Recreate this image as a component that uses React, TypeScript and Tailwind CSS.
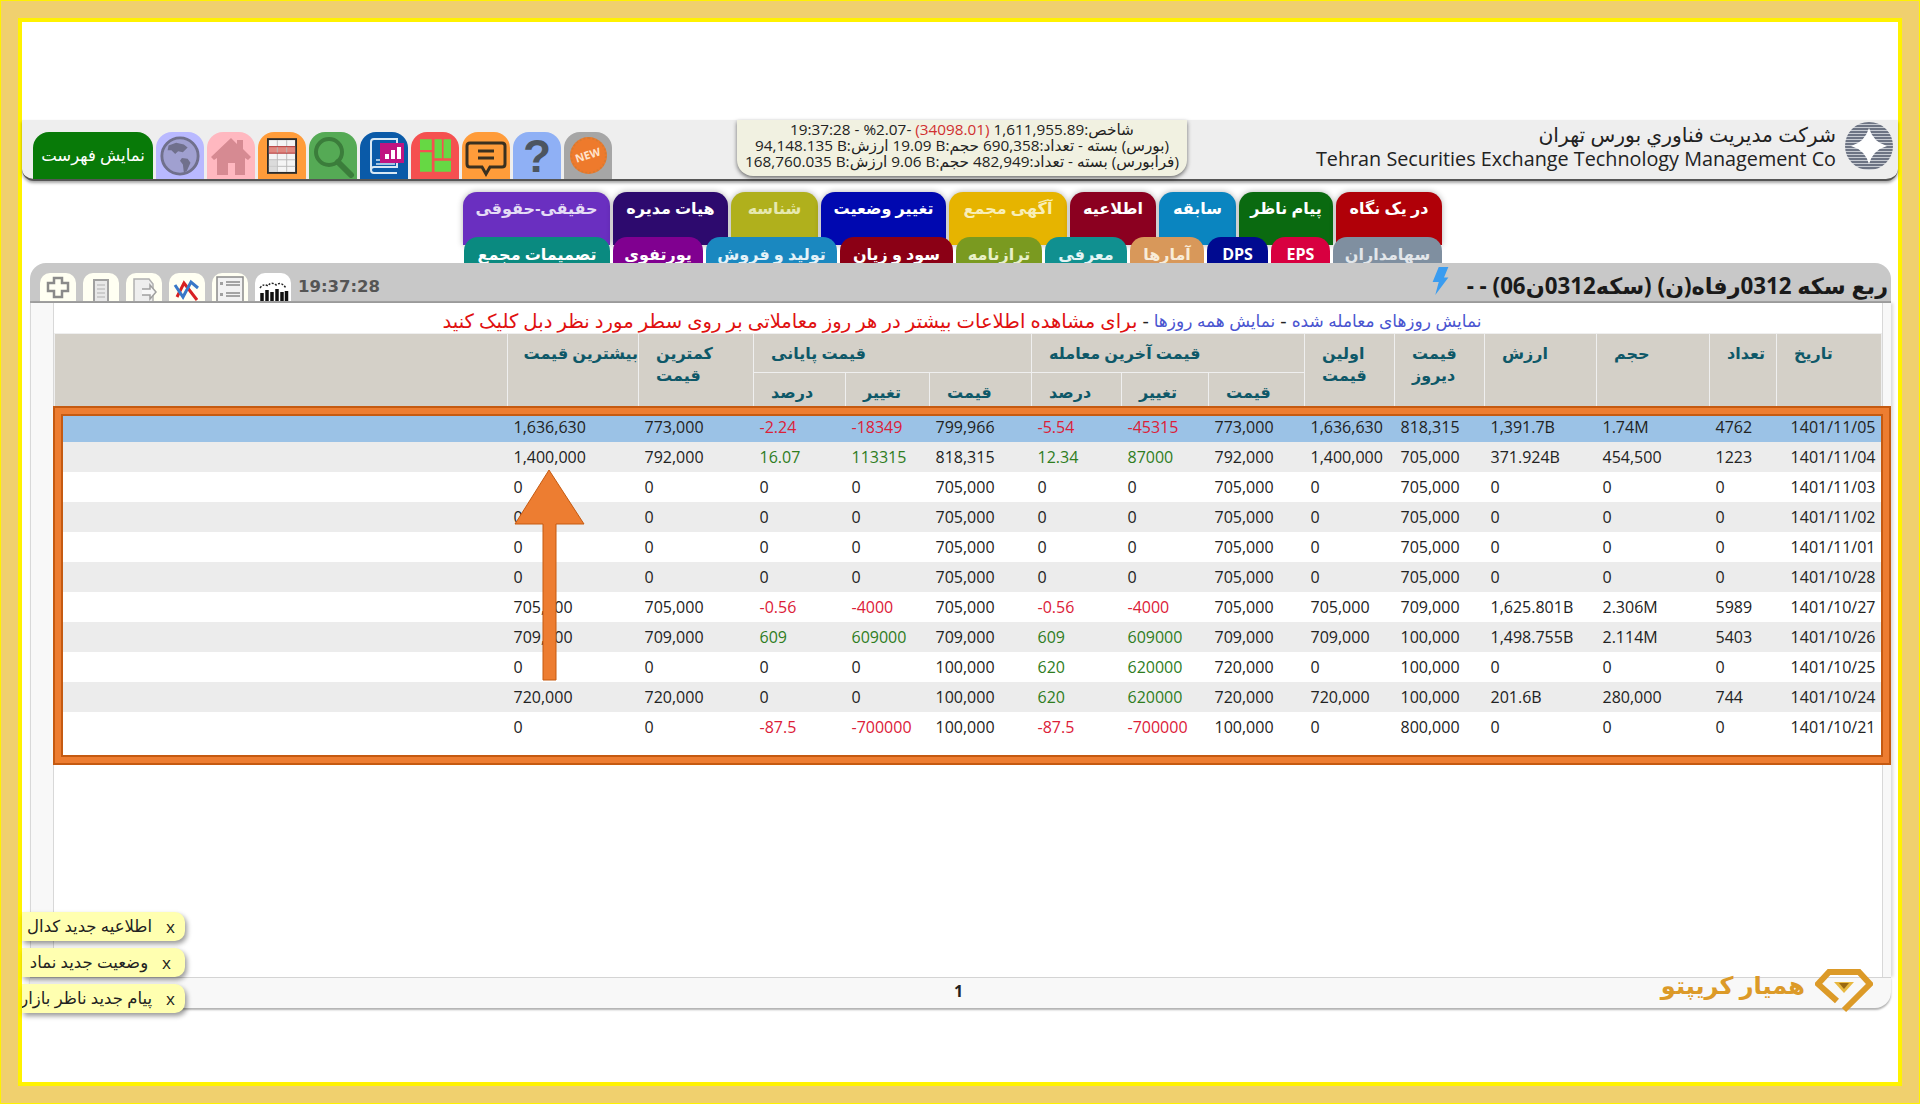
import type { ReactNode } from "react";

const tabsTop = [
  { label: "حقیقی-حقوقی", cls: "w-[147px] bg-[#6a2fc0] text-[#e4dcf5]" },
  { label: "هیات مدیره", cls: "w-[115px] bg-[#2d0a6e] text-white" },
  { label: "شناسه", cls: "w-[87px] bg-[#b0b01c] text-[#e6e8b0]" },
  { label: "تغییر وضعیت", cls: "w-[125px] bg-[#0008b0] text-white" },
  { label: "آگهی مجمع", cls: "w-[118px] bg-[#e6b400] text-[#f8eeb8]" },
  { label: "اطلاعیه", cls: "w-[86px] bg-[#8b0020] text-white" },
  { label: "سابقه", cls: "w-[77px] bg-[#0a85c0] text-white" },
  { label: "پیام ناظر", cls: "w-[94px] bg-[#0a6a10] text-white" },
  { label: "در یک نگاه", cls: "w-[106px] bg-[#b00008] text-white" },
];

const tabsBottom = [
  { label: "تصمیمات مجمع", cls: "w-[146px] bg-[#0a8a80] text-white" },
  { label: "پورتفوی", cls: "w-[90px] bg-[#800090] text-white" },
  { label: "تولید و فروش", cls: "w-[131px] bg-[#1a88c0] text-[#e4f2f8]" },
  { label: "سود و زیان", cls: "w-[113px] bg-[#8b0015] text-white" },
  { label: "ترازنامه", cls: "w-[86px] bg-[#7a9a20] text-[#e8f0c8]" },
  { label: "معرفی", cls: "w-[82px] bg-[#109090] text-[#e4f4f4]" },
  { label: "آمارها", cls: "w-[74px] bg-[#d8985a] text-[#f8ecd8]" },
  { label: "DPS", cls: "w-[61px] bg-[#000a90] text-white" },
  { label: "EPS", cls: "w-[59px] bg-[#d80040] text-white" },
  { label: "سهامداران", cls: "w-[109px] bg-[#7f8fa0] text-[#e2e6ea]" },
];

// date, count, volume, value, yesterday, first, last price, last change, last %, close, close change, close %, low, high
const rows = [
  ["1401/11/05", "4762", "1.74M", "1,391.7B", "818,315", "1,636,630", "773,000", "-45315", "-5.54", "799,966", "-18349", "-2.24", "773,000", "1,636,630"],
  ["1401/11/04", "1223", "454,500", "371.924B", "705,000", "1,400,000", "792,000", "87000", "12.34", "818,315", "113315", "16.07", "792,000", "1,400,000"],
  ["1401/11/03", "0", "0", "0", "705,000", "0", "705,000", "0", "0", "705,000", "0", "0", "0", "0"],
  ["1401/11/02", "0", "0", "0", "705,000", "0", "705,000", "0", "0", "705,000", "0", "0", "0", "0"],
  ["1401/11/01", "0", "0", "0", "705,000", "0", "705,000", "0", "0", "705,000", "0", "0", "0", "0"],
  ["1401/10/28", "0", "0", "0", "705,000", "0", "705,000", "0", "0", "705,000", "0", "0", "0", "0"],
  ["1401/10/27", "5989", "2.306M", "1,625.801B", "709,000", "705,000", "705,000", "-4000", "-0.56", "705,000", "-4000", "-0.56", "705,000", "705,000"],
  ["1401/10/26", "5403", "2.114M", "1,498.755B", "100,000", "709,000", "709,000", "609000", "609", "709,000", "609000", "609", "709,000", "709,000"],
  ["1401/10/25", "0", "0", "0", "100,000", "0", "720,000", "620000", "620", "100,000", "0", "0", "0", "0"],
  ["1401/10/24", "744", "280,000", "201.6B", "100,000", "720,000", "720,000", "620000", "620", "100,000", "0", "0", "720,000", "720,000"],
  ["1401/10/21", "0", "0", "0", "800,000", "0", "100,000", "-700000", "-87.5", "100,000", "-700000", "-87.5", "0", "0"],
];

const colWidths = ["w-[105px]", "w-[67px]", "w-[113px]", "w-[112px]", "w-[90px]", "w-[90px]", "w-[96px]", "w-[87px]", "w-[90px]", "w-[102px]", "w-[84px]", "w-[92px]", "w-[115px]", "w-[131px]", "w-[453px]"];

function signColor(col: number, value: string) {
  if (![7, 8, 10, 11].includes(col) || value === "0") return "text-[#222]";
  return value.startsWith("-") ? "text-[#dc2038]" : "text-[#2f7d1e]";
}

function rowBg(index: number) {
  if (index === 0) return "bg-[#9bc2e6]";
  return index % 2 === 1 ? "bg-[#ececec]" : "bg-white";
}

function IconTile({ className, children }: { className: string; children: ReactNode }) {
  return <div className={`flex h-[47px] w-[48px] items-center justify-center overflow-hidden rounded-t-[16px] ${className}`}>{children}</div>;
}

function ToolTile({ className = "bg-[#fffff2]", children }: { className?: string; children: ReactNode }) {
  return <div className={`h-[28px] w-[36px] overflow-hidden rounded-t-[10px] ${className}`}>{children}</div>;
}

function HeaderCell({ children, rowSpan, colSpan }: { children?: ReactNode; rowSpan?: number; colSpan?: number }) {
  return (
    <th
      rowSpan={rowSpan}
      colSpan={colSpan}
      dir="rtl"
      className="border border-[#efefef] bg-[#d4d0c8] pt-[8px] pl-[17px] text-left align-top text-[16px] leading-[22px] font-bold whitespace-nowrap text-[#0e5868]"
    >
      {children}
    </th>
  );
}

function Note({ label, xClass }: { label: string; xClass: string }) {
  return (
    <div className="flex h-[29px] w-[163px] items-center justify-end overflow-hidden rounded-r-[10px] bg-[#ffffb0] text-[16.5px] text-[#222] shadow-[2px_3px_5px_rgba(0,0,0,0.4)]">
      <span dir="rtl" className="whitespace-nowrap">{label}</span>
      <span className={`text-[17px] [font-family:'Open_Sans',sans-serif] ${xClass}`}>x</span>
    </div>
  );
}

export default function App() {
  return (
    <div className="relative h-[1104px] w-[1920px] overflow-hidden border border-[#fff200] bg-[#f0d06e] [font-family:'Open_Sans','DejaVu_Sans',sans-serif]">
      <div className="mx-[17px] mt-[17px] h-[1068px] border-[4px] border-[#fff200] bg-white">
        <div className="h-[98px]" />

        {/* top bar */}
        <div className="flex h-[61px] w-full items-end rounded-b-[12px] border-b-2 border-[#555] bg-[#eeeeee] shadow-[0_2px_3px_rgba(0,0,0,0.35)]">
          <div className="ml-[11px] flex gap-[3px]">
            <div dir="rtl" className="flex h-[47px] w-[120px] items-center justify-center rounded-t-[16px] bg-[#087a08] text-[16.5px] text-white">نمایش فهرست</div>
            <IconTile className="bg-[#b9b9ff]">
              <svg viewBox="0 0 44 44" className="h-[42px] w-[42px]">
                <circle cx="22" cy="22" r="19" fill="#a0a0d0" stroke="#70708c" strokeWidth="3" />
                <path d="M10 11l8-3 8 2 4 3-5 5-5-1-3 3-4-4-4 0z" fill="#70708c" />
                <path d="M24 24l6 1 3 4-4 9-3 1-1-8-3-4z" fill="#70708c" />
              </svg>
            </IconTile>
            <IconTile className="bg-[#ffb8c0]">
              <svg viewBox="0 0 44 44" className="h-[44px] w-[44px]">
                <path d="M22 4L2 23l3 3 3-2v17h11V29h7v12h10V24l3 2 3-3-8-8V6h-6v4z" fill="#d68a92" />
              </svg>
            </IconTile>
            <IconTile className="bg-[#ff9c3a]">
              <svg viewBox="0 0 32 38" className="h-[36px] w-[30px]">
                <rect x="1" y="1" width="30" height="36" fill="#f4f4f4" stroke="#2a2a2a" strokeWidth="2" />
                <rect x="2" y="9" width="28" height="7" fill="#e08880" />
                <path d="M2 23h28M2 30h28M11 2v34M21 2v34" stroke="#b8b8b8" strokeWidth="1" />
                <path d="M2 9h28M2 16h28" stroke="#b03030" strokeWidth="1" />
                <rect x="2" y="23" width="9" height="13" fill="#d0d0d0" opacity="0.7" />
              </svg>
            </IconTile>
            <IconTile className="bg-[#55aa55]">
              <svg viewBox="0 0 44 44" className="h-[44px] w-[44px]">
                <circle cx="18" cy="18" r="13" fill="none" stroke="#3b7d3b" strokeWidth="4" />
                <path d="M27 28l13 13" stroke="#3b7d3b" strokeWidth="6" strokeLinecap="round" />
              </svg>
            </IconTile>
            <IconTile className="bg-[#0a5aa8]">
              <svg viewBox="0 0 44 44" className="h-[44px] w-[44px]">
                <path d="M9 36V8q0-3 3-3h23v28H12q-3 0-3 3t3 3h23" fill="none" stroke="#d8e8f4" strokeWidth="2" />
                <path d="M14 26h14M14 30h19" stroke="#d8e8f4" strokeWidth="1.5" />
                <rect x="18" y="9" width="24" height="20" fill="#c01480" />
                <rect x="23" y="20" width="4" height="5" fill="#fff" />
                <rect x="29" y="16" width="4" height="9" fill="#fff" />
                <rect x="35" y="13" width="4" height="12" fill="#fff" />
              </svg>
            </IconTile>
            <IconTile className="bg-[#f55050]">
              <svg viewBox="0 0 92 97" className="h-[33px] w-[31px]">
                <path d="M0 0h35v32H0zM43 0h22v57H43zM70 0h22v57H70zM0 39h35v58H0zM43 64h49v33H43z" fill="#66d844" />
              </svg>
            </IconTile>
            <IconTile className="bg-[#ff9c3a]">
              <svg viewBox="0 0 44 44" className="h-[44px] w-[44px]">
                <path d="M6 9h32q3 0 3 3v18q0 3-3 3H26l-4 7-4-7H6q-3 0-3-3V12q0-3 3-3z" fill="none" stroke="#3a3020" strokeWidth="3" />
                <path d="M14 17h16M14 24h16" stroke="#3a3020" strokeWidth="3" />
              </svg>
            </IconTile>
            <IconTile className="bg-[#8fb0f5]">
              <span className="text-[46px] leading-none font-bold text-[#4c5560] [font-family:'Liberation_Sans',sans-serif]">?</span>
            </IconTile>
            <IconTile className="bg-[#a6a6a6]">
              <div className="flex h-[37px] w-[37px] items-center justify-center rounded-full border-2 border-dotted border-[#d87a30] bg-[#ee7a2c]">
                <span className="-rotate-[18deg] text-[11px] font-bold text-[#ffe4cc]">NEW</span>
              </div>
            </IconTile>
          </div>

          <div dir="rtl" className="ml-[125px] h-[56px] w-[450px] self-start rounded-b-[16px] bg-[#f1f1e1] pt-[1px] text-center text-[15.3px] leading-[16px] text-[#222] shadow-[0_2px_4px_rgba(0,0,0,0.55)]">
            <div>شاخص:1,611,955.89 <span className="text-[#d03030]">(34098.01)</span> -2.07{"\u200F"}% - 19:37:28</div>
            <div>(بورس) بسته - تعداد:690,358 حجم:<bdi dir="ltr">19.09 B</bdi> ارزش:<bdi dir="ltr">94,148.135 B</bdi></div>
            <div>(فرابورس) بسته - تعداد:482,949 حجم:<bdi dir="ltr">9.06 B</bdi> ارزش:<bdi dir="ltr">168,760.035 B</bdi></div>
          </div>

          <div className="ml-auto flex items-start gap-[9px] self-start pt-[1px] pr-[5px]">
            <div className="text-right text-[#222]">
              <div dir="rtl" className="text-[20.3px] leading-[26px]">شرکت مدیریت فناوري بورس تهران</div>
              <div className="text-[19.8px] leading-[24px]">Tehran Securities Exchange Technology Management Co</div>
            </div>
            <svg viewBox="0 0 48 48" className="mt-[1px] h-[48px] w-[48px]">
              <defs>
                <pattern id="stripes" width="48" height="3" patternUnits="userSpaceOnUse">
                  <rect width="48" height="2.2" fill="#6d7484" />
                  <rect y="2.2" width="48" height="0.8" fill="#c4c8d0" />
                </pattern>
              </defs>
              <circle cx="24" cy="24" r="24" fill="url(#stripes)" />
              <path d="M24 6Q28 20 42 24 28 28 24 42 20 28 6 24 20 20 24 6z" fill="#fff" />
            </svg>
          </div>
        </div>

        {/* tabs */}
        <div className="mt-[11px] ml-[441px] flex gap-[3px]">
          {tabsTop.map((tab) => (
            <div key={tab.label} dir="rtl" className={`h-[53px] rounded-t-[14px] pt-[6px] text-center text-[16px] leading-[20px] font-bold shadow-[0_0_6px_rgba(0,0,0,0.3)] ${tab.cls}`}>
              {tab.label}
            </div>
          ))}
        </div>
        <div className="relative -mt-[8px] ml-[442px] flex gap-[3px]">
          {tabsBottom.map((tab) => (
            <div key={tab.label} dir="rtl" className={`h-[26px] overflow-hidden rounded-t-[14px] pt-[7px] text-center text-[16px] leading-[20px] font-bold ${tab.cls}`}>
              {tab.label}
            </div>
          ))}
        </div>

        {/* main panel */}
        <div className="ml-[8px] w-[1861px]">
          <div className="flex h-[40px] items-end justify-between rounded-t-[16px] border-b-2 border-[#a4a4a4] bg-[#c8c8c8] pl-[10px]">
            <div className="flex items-end gap-[7px]">
              <ToolTile>
                <svg viewBox="0 0 36 28" className="h-[28px] w-[36px]"><path d="M14 10V5h8v5h6v8h-6v6h-8v-6H8v-8z" fill="none" stroke="#8a8a8a" strokeWidth="2.5" /></svg>
              </ToolTile>
              <ToolTile>
                <svg viewBox="0 0 36 28" className="h-[28px] w-[36px]"><rect x="11" y="7" width="14" height="22" fill="#e8e8e8" stroke="#a0a0a0" strokeWidth="2" /><path d="M14 12h8M14 16h8M14 20h8M14 24h8" stroke="#b0b0b0" /></svg>
              </ToolTile>
              <ToolTile>
                <svg viewBox="0 0 36 28" className="h-[28px] w-[36px]"><path d="M8 6h15l4 5v18H8z" fill="#eeeeee" stroke="#b0b0b0" strokeWidth="1.5" /><path d="M16 16h8v-4l6 7-6 7v-4h-8" fill="#f8f8f8" stroke="#a0a0a0" strokeWidth="1.5" /></svg>
              </ToolTile>
              <ToolTile>
                <svg viewBox="0 0 36 28" className="h-[28px] w-[36px]"><path d="M8 24L15 10l13 17" fill="none" stroke="#d82020" strokeWidth="3" /><path d="M6 12l8 12 8-15 7 6" fill="none" stroke="#3878c8" strokeWidth="3" /></svg>
              </ToolTile>
              <ToolTile>
                <svg viewBox="0 0 36 28" className="h-[28px] w-[36px]"><rect x="5" y="4" width="26" height="26" fill="#f2f2f2" stroke="#8a8a8a" strokeWidth="1.5" /><path d="M14 9h14M14 12h14M14 20h14M14 23h14" stroke="#8a8a8a" strokeWidth="1.5" /><rect x="8" y="9" width="3" height="3" fill="#a0a0a0" /><rect x="8" y="20" width="3" height="3" fill="#a0a0a0" /></svg>
              </ToolTile>
              <ToolTile className="bg-white">
                <svg viewBox="0 0 36 28" className="h-[28px] w-[36px]"><path d="M5 15q3-5 8-2 3-5 8-1 5-4 10 3" fill="none" stroke="#222" strokeWidth="1.5" strokeDasharray="2 1.5" /><path d="M7 28v-8M12 28V17M17 28v-9M22 28V16M27 28v-9M31.5 28V18" stroke="#111" strokeWidth="3.5" /></svg>
              </ToolTile>
              <span className="mb-[3px] text-[16.5px] leading-[22px] font-bold text-[#555] [font-family:'DejaVu_Sans',sans-serif]">19:37:28</span>
            </div>
            <div className="flex items-start gap-[18px] self-start pt-[4px] pr-[3px]">
              <svg viewBox="0 0 18 32" className="h-[28px] w-[17px]"><path d="M7 0h11l-5 12h5L3 32l4-15H0z" fill="#3a9cf0" /></svg>
              <div dir="rtl" className="pt-[5px] text-[22.3px] leading-[28px] font-bold text-[#1a1a1a]">ربع سکه 0312رفاه(ن) (سکه0312ن06) - -</div>
            </div>
          </div>

          <div className="flex h-[674px] bg-[#f8f8f8] shadow-[2px_0_3px_rgba(0,0,0,0.15)]">
            <div className="w-[23px] border-l border-[#d8d8d8]" />
            <div className="w-[1830px] border-x border-[#d8d8d8] bg-white">
              <div dir="rtl" className="flex h-[30px] items-center justify-center pt-[5px] pr-[12px] text-[19.6px] whitespace-nowrap text-[#e01010]">
                <span className="text-[17px] text-[#4a55d0]">نمایش روزهای معامله شده</span>
                <span className="mx-[5px] text-[#222]">-</span>
                <span className="text-[17px] text-[#4a55d0]">نمایش همه روزها</span>
                <span className="mx-[5px] text-[#222]">-</span>
                <span>برای مشاهده اطلاعات بیشتر در هر روز معاملاتی بر روی سطر مورد نظر دبل کلیک کنید</span>
              </div>
              <table dir="rtl" className="w-[1827px] table-fixed border-collapse text-[16px]">
                <colgroup>
                  {colWidths.map((w, i) => (
                    <col key={i} className={w} />
                  ))}
                </colgroup>
                <thead>
                  <tr className="h-[39px]">
                    <HeaderCell rowSpan={2}>تاریخ</HeaderCell>
                    <HeaderCell rowSpan={2}>تعداد</HeaderCell>
                    <HeaderCell rowSpan={2}>حجم</HeaderCell>
                    <HeaderCell rowSpan={2}>ارزش</HeaderCell>
                    <HeaderCell rowSpan={2}>قیمت<br />دیروز</HeaderCell>
                    <HeaderCell rowSpan={2}>اولین<br />قیمت</HeaderCell>
                    <HeaderCell colSpan={3}>قیمت آخرین معامله</HeaderCell>
                    <HeaderCell colSpan={3}>قیمت پایانی</HeaderCell>
                    <HeaderCell rowSpan={2}>کمترین<br />قیمت</HeaderCell>
                    <HeaderCell rowSpan={2}>بیشترین قیمت</HeaderCell>
                    <HeaderCell rowSpan={2} />
                  </tr>
                  <tr className="h-[39px]">
                    <HeaderCell>قیمت</HeaderCell>
                    <HeaderCell>تغییر</HeaderCell>
                    <HeaderCell>درصد</HeaderCell>
                    <HeaderCell>قیمت</HeaderCell>
                    <HeaderCell>تغییر</HeaderCell>
                    <HeaderCell>درصد</HeaderCell>
                  </tr>
                </thead>
                <tbody>
                  {rows.map((row, index) => (
                    <tr key={row[0]} className={`h-[30px] ${rowBg(index)}`}>
                      {row.map((value, col) => (
                        <td key={col} dir="ltr" className={`whitespace-nowrap ${col === 0 ? "pr-[6px] text-right" : "pl-[6px] text-left"} ${signColor(col, value)}`}>
                          {value}
                        </td>
                      ))}
                      <td />
                    </tr>
                  ))}
                </tbody>
              </table>
            </div>
          </div>

          {/* pager */}
          <div className="relative flex h-[31px] items-center justify-center rounded-b-[16px] border-t border-[#d4d4d4] bg-[#f8f8f8] pr-[4px] pb-[5px] text-[16px] font-bold text-[#222] shadow-[0_2px_2px_rgba(0,0,0,0.3)]">
            1
            <div className="absolute right-[18px] bottom-[-5px] flex items-center gap-[10px]">
              <span dir="rtl" className="pb-[12px] text-[24px] leading-[30px] font-bold text-[#dc9a28]">همیار کریپتو</span>
              <svg viewBox="0 0 58 44" className="h-[44px] w-[58px]">
                <path d="M22 32L3 15 14 3h30l11 12-26 26" fill="none" stroke="#dc9a28" strokeWidth="6" />
                <path d="M19 13h20l-10 11z" fill="#e8b840" />
                <path d="M24 14h10l-5 6z" fill="#9a6810" />
              </svg>
            </div>
          </div>
        </div>
      </div>

      {/* annotation frame */}
      <div className="absolute top-[405px] left-[52px] h-[359px] w-[1838px] border-2 border-[#c55a11]">
        <div className="h-full w-full border-[6px] border-[#ed7d31]">
          <div className="h-full w-full border-2 border-[#c55a11]" />
        </div>
      </div>
      <svg viewBox="0 0 72 212" className="absolute top-[468px] left-[513px] h-[212px] w-[72px]">
        <path d="M35 1L70 55H42V211H29V55H1z" fill="#ed7d31" stroke="#c55a11" strokeWidth="1" />
      </svg>

      {/* notifications */}
      <div className="absolute top-[911px] left-[21px] flex flex-col gap-[7px]">
        <Note label="اطلاعیه جدید کدال" xClass="mr-[10px] ml-[14px]" />
        <Note label="وضعیت جدید نماد" xClass="mr-[14px] ml-[14px]" />
        <Note label="پیام جدید ناظر بازار" xClass="mr-[10px] ml-[14px]" />
      </div>
    </div>
  );
}
